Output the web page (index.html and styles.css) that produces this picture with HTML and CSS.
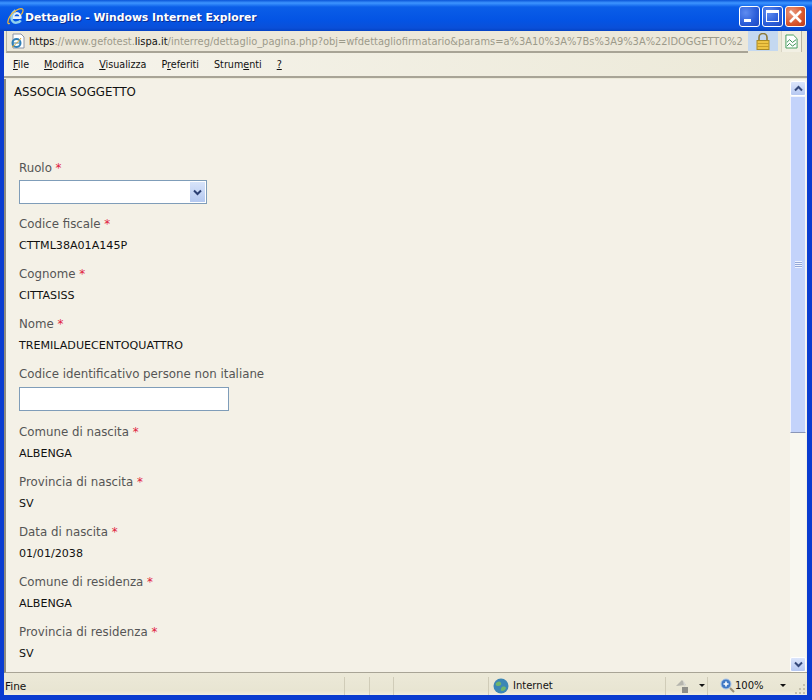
FILE: index.html
```html
<!DOCTYPE html>
<html lang="en">
<head>
  <meta charset="UTF-8">
  <title>Dettaglio - Windows Internet Explorer</title>
  <link rel="stylesheet" href="styles.css">
</head>
<body>
  <div class="window">
    <div class="titlebar">
      <svg class="ie-logo" width="19" height="19" viewBox="0 0 20 20">
        <path d="M15.500 11.500H7.500C7.500 8.500 9.500 6.500 11.500 6.500s3.800 2 3.800 4.500H8" fill="none" stroke="#e8f4fb" stroke-width="2.400"/>
        <path d="M15.500 14c-1.500 2.500-6.500 3.500-8.500 1-2.500-3-1-9 3-11.500" fill="none" stroke="#8fd0ee" stroke-width="2.600"/>
        <path d="M4 17C1 19 1.500 14 4 10c3-5 10-9 13-8 2 .7.500 4-1 6" fill="none" stroke="#f0b93c" stroke-width="1.300"/>
      </svg>
      <span class="title-text">Dettaglio - Windows Internet Explorer</span>
      <div class="win-buttons">
        <div class="win-btn"><span class="icon-min"></span></div>
        <div class="win-btn"><span class="icon-max"></span></div>
        <div class="win-btn close">
          <svg width="15" height="15" viewBox="0 0 15 15"><path d="M2 2l11 11M13 2L2 13" stroke="#fff" stroke-width="2.600"/></svg>
        </div>
      </div>
    </div>

    <div class="inner">
      <div class="addressbar">
        <div class="address-box">
          <svg class="page-icon" width="16" height="16" viewBox="0 0 16 16">
            <path d="M3 1h8l3 3v11H3z" fill="#fff" stroke="#8a94a6"/>
            <circle cx="6.500" cy="10" r="4" fill="none" stroke="#2f80b8" stroke-width="2"/>
            <path d="M3 10h7" stroke="#2f80b8"/>
            <path d="M2 14c2-1 7-6 9-9" stroke="#e0a92e" fill="none"/>
          </svg>
          <span class="url"><span class="url-dark">https</span>://www.gefotest.<span class="url-dark">lispa.it</span>/interreg/dettaglio_pagina.php?obj=wfdettagliofirmatario&amp;params=a%3A10%3A%7Bs%3A9%3A%22IDOGGETTO%2</span>
        </div>
        <div class="lock-box">
          <svg width="14" height="17" viewBox="0 0 14 17">
            <path d="M3 8V4.500a4 4 0 0 1 8 0V8" fill="none" stroke="#8d7a3a" stroke-width="1.600"/>
            <rect x="1" y="7.500" width="12" height="9" fill="#eec544" stroke="#a98a24"/>
            <path d="M1 10.500h12M1 13.500h12" stroke="#c79e2a"/>
          </svg>
        </div>
        <div class="compat-box">
          <svg width="13" height="15" viewBox="0 0 14 16">
            <path d="M1 1h8l4 4v10H1z" fill="#fff" stroke="#3d9a56"/>
            <path d="M2 9l3-3 3 3 4-3M2 13l3-3 3 3 4-3" fill="none" stroke="#2f8a4a"/>
          </svg>
        </div>
      </div>

      <div class="menubar">
        <span class="menu-item"><u>F</u>ile</span>
        <span class="menu-item"><u>M</u>odifica</span>
        <span class="menu-item"><u>V</u>isualizza</span>
        <span class="menu-item">P<u>r</u>eferiti</span>
        <span class="menu-item">Strum<u>e</u>nti</span>
        <span class="menu-item"><u>?</u></span>
      </div>

      <div class="viewport">
        <div class="content">
          <div class="page-title">ASSOCIA SOGGETTO</div>

          <div class="field field-select">
            <div class="label">Ruolo <span class="req">*</span></div>
            <div class="select-box">
              <div class="select-arrow">
                <svg width="9" height="7" viewBox="0 0 9 7"><path d="M1 1.500l3.500 3.500L8 1.500" fill="none" stroke="#2b3f73" stroke-width="2"/></svg>
              </div>
            </div>
          </div>
          <div class="field">
            <div class="label">Codice fiscale <span class="req">*</span></div>
            <div class="value">CTTML38A01A145P</div>
          </div>
          <div class="field">
            <div class="label">Cognome <span class="req">*</span></div>
            <div class="value">CITTASISS</div>
          </div>
          <div class="field">
            <div class="label">Nome <span class="req">*</span></div>
            <div class="value">TREMILADUECENTOQUATTRO</div>
          </div>
          <div class="field field-input">
            <div class="label">Codice identificativo persone non italiane</div>
            <div class="text-input"></div>
          </div>
          <div class="field">
            <div class="label">Comune di nascita <span class="req">*</span></div>
            <div class="value">ALBENGA</div>
          </div>
          <div class="field">
            <div class="label">Provincia di nascita <span class="req">*</span></div>
            <div class="value">SV</div>
          </div>
          <div class="field">
            <div class="label">Data di nascita <span class="req">*</span></div>
            <div class="value">01/01/2038</div>
          </div>
          <div class="field">
            <div class="label">Comune di residenza <span class="req">*</span></div>
            <div class="value">ALBENGA</div>
          </div>
          <div class="field">
            <div class="label">Provincia di residenza <span class="req">*</span></div>
            <div class="value">SV</div>
          </div>
        </div>

        <div class="scrollbar">
          <div class="scroll-btn">
            <svg width="9" height="7" viewBox="0 0 9 7"><path d="M1 5.500L4.500 2 8 5.500" fill="none" stroke="#34487a" stroke-width="2"/></svg>
          </div>
          <div class="scroll-thumb"><span class="grip"></span></div>
          <div class="scroll-track"></div>
          <div class="scroll-btn">
            <svg width="9" height="7" viewBox="0 0 9 7"><path d="M1 1.500L4.500 5 8 1.500" fill="none" stroke="#34487a" stroke-width="2"/></svg>
          </div>
        </div>
      </div>

      <div class="statusbar">
        <div class="status-text">Fine</div>
        <div class="status-cell blank-a"></div>
        <div class="status-cell blank-b"></div>
        <div class="status-cell blank-c"></div>
        <div class="status-cell zone">
          <svg width="16" height="16" viewBox="0 0 16 16">
            <circle cx="8" cy="8" r="7.500" fill="#3b86b5"/>
            <path d="M3 5c2-2 4-2 5 0s-1 3-3 3-3-1-2-3zM9 9c2-1 4 0 4 1s-2 3-4 3 -1-3 0-4z" fill="#6fb56a"/>
          </svg>
          <span>Internet</span>
        </div>
        <div class="status-cell protect">
          <svg width="18" height="16" viewBox="0 0 18 16">
            <path d="M1 8l6-6 4 5z" fill="#b5b5ad"/>
            <path d="M8 2l3 5-2 2z" fill="#d8d8d2"/>
            <rect x="7" y="9" width="6" height="6" fill="#8e8e88"/>
          </svg>
          <span class="caret"></span>
        </div>
        <div class="status-cell zoom">
          <svg width="15" height="15" viewBox="0 0 15 15">
            <circle cx="6" cy="6" r="5" fill="#3f78c4" stroke="#a9c4e6"/>
            <path d="M3.500 6h5M6 3.500v5" stroke="#fff" stroke-width="1.600"/>
            <path d="M10 10l4 4" stroke="#9a8f78" stroke-width="2"/>
          </svg>
          <span class="zoom-text">100%</span>
          <span class="caret"></span>
          <svg class="resize-grip" width="12" height="12" viewBox="0 0 12 12">
            <path d="M9 1h2v2H9zM5 5h2v2H5zM9 5h2v2H9zM1 9h2v2H1zM5 9h2v2H5zM9 9h2v2H9z" fill="#c4c0ac"/>
          </svg>
        </div>
      </div>
    </div>
  </div>
</body>
</html>
```

FILE: styles.css
```css
html, body {
  margin: 0;
  padding: 0;
  height: 700px;
  overflow: hidden;
}

.window {
  height: 700px;
  display: flex;
  flex-direction: column;
  font-family: "Liberation Sans", Arial, sans-serif;
  background-color: #0a3cd0;
}

.titlebar {
  height: 31px;
  flex: none;
  box-sizing: border-box;
  display: flex;
  align-items: center;
  padding: 0 6px 0 6px;
  background: linear-gradient(to bottom, #0a55d8 0, #3d95ff 3px, #0a5ee8 7px, #0454e4 20px, #0a4fd8 28px, #0442c4 31px);
}

.ie-logo {
  flex: none;
  margin-top: 2px;
}

.title-text {
  flex: 1;
  margin-top: 4px;
  color: #fff;
  font-family: "DejaVu Sans", sans-serif;
  font-size: 10.800px;
  font-weight: bold;
  text-shadow: 1px 1px 0 #0a2c90;
}

.win-buttons {
  display: flex;
  gap: 2px;
  margin-top: 1px;
}

.win-btn {
  width: 21px;
  height: 21px;
  box-sizing: border-box;
  border: 1px solid #fff;
  border-radius: 3px;
  background: radial-gradient(circle at 30% 30%, #5f8cf0, #2a5cd8 60%, #2048c0);
  position: relative;
  display: flex;
  align-items: center;
  justify-content: center;
}

.win-btn.close {
  background: radial-gradient(circle at 30% 30%, #ea9a80, #d8562c 60%, #b83a1c);
}

.icon-min {
  width: 7px;
  height: 3px;
  background-color: #fff;
  margin-top: 9px;
  margin-right: 4px;
}

.icon-max {
  width: 13px;
  height: 12px;
  box-sizing: border-box;
  border: 1px solid #fff;
  border-top-width: 3px;
}

.inner {
  flex: 1;
  min-height: 0;
  margin: 0 5px 5px 4px;
  display: flex;
  flex-direction: column;
  background-color: #ece9d8;
}

.addressbar {
  height: 22px;
  flex: none;
  display: flex;
  background-color: #ece9d8;
}

.address-box {
  flex: none;
  width: 742px;
  margin-left: 2px;
  box-sizing: border-box;
  border-bottom: 2px solid #a8a496;
  border-left: 1px solid #b8b4a4;
  display: flex;
  align-items: center;
  background-color: #ece8da;
  overflow: hidden;
  white-space: nowrap;
}

.page-icon {
  flex: none;
  margin: 0 3px 0 3px;
}

.url {
  font-family: "DejaVu Sans", sans-serif;
  font-size: 9.900px;
  color: #9c9a8a;
}

.url-dark {
  color: #111;
}

.lock-box {
  flex: none;
  width: 30px;
  height: 20px;
  background-color: #c4d8f0;
  display: flex;
  align-items: center;
  justify-content: center;
}

.compat-box {
  flex: none;
  width: 21px;
  height: 21px;
  margin-left: 3px;
  box-sizing: border-box;
  border-right: 1px solid #b8b4a4;
  border-left: 1px solid #d8d4c4;
  background-color: #f2f0e4;
  display: flex;
  align-items: center;
  justify-content: center;
}

.menubar {
  height: 25px;
  flex: none;
  box-sizing: border-box;
  display: flex;
  align-items: center;
  gap: 15px;
  padding-left: 9px;
  background: linear-gradient(to right, #f6f4ec, #ece9d8);
  border-bottom: 2px solid #a8a496;
  font-family: "DejaVu Sans", sans-serif;
  font-size: 9.600px;
  color: #111;
}

.viewport {
  flex: 1;
  min-height: 0;
  display: flex;
  background-color: #f4f1e7;
  border-left: 2px solid #8e8c80;
  border-bottom: 1px solid #a8a496;
  margin-top: 1px;
}

.content {
  flex: 1;
  min-width: 0;
  overflow: hidden;
  padding: 5px 0 0 8px;
  font-family: "DejaVu Sans", sans-serif;
  font-size: 11.800px;
  line-height: 16px;
  color: #111;
}

.page-title {
  height: 76px;
}

.field {
  height: 50px;
  padding-left: 5px;
}

.field-select {
  height: 56px;
}

.field-input {
  height: 58px;
}

.label {
  color: #555;
  margin-bottom: 5px;
}

.value {
  font-size: 11.100px;
  padding-top: 1px;
}

.req {
  color: #e0203c;
}

.select-box {
  width: 188px;
  height: 24px;
  box-sizing: border-box;
  border: 1px solid #7f9db9;
  background-color: #fff;
  display: flex;
  justify-content: flex-end;
  padding: 1px;
  margin-top: -1px;
}

.select-arrow {
  width: 15px;
  background: linear-gradient(to bottom, #d8e4fa, #b4c8f0);
  display: flex;
  align-items: center;
  justify-content: center;
}

.text-input {
  width: 210px;
  height: 24px;
  box-sizing: border-box;
  border: 1px solid #7f9db9;
  background-color: #fff;
}

.scrollbar {
  flex: none;
  width: 16px;
  margin-right: 1px;
  padding-top: 2px;
  display: flex;
  flex-direction: column;
  background-color: #f8f7f0;
}

.scroll-btn {
  height: 15px;
  flex: none;
  box-sizing: border-box;
  border: 1px solid #fff;
  border-radius: 2px;
  background: linear-gradient(to bottom, #dbe5fb, #b6c8f2);
  display: flex;
  align-items: center;
  justify-content: center;
}

.scroll-thumb {
  height: 337px;
  flex: none;
  box-sizing: border-box;
  border: 1px solid #f2f4fc;
  border-bottom-color: #8a96b8;
  background-color: #c3d3fb;
  display: flex;
  align-items: center;
  justify-content: center;
}

.grip {
  width: 7px;
  height: 7px;
  background: repeating-linear-gradient(to bottom, #eef3ff 0, #eef3ff 1px, #94a8d8 1px, #94a8d8 2px);
}

.scroll-track {
  flex: 1;
}

.statusbar {
  height: 22px;
  flex: none;
  box-sizing: border-box;
  padding-top: 3px;
  display: flex;
  align-items: center;
  font-family: "DejaVu Sans", sans-serif;
  font-size: 10px;
  color: #111;
  background: linear-gradient(to bottom, #ece9d8, #e8e5d2 80%, #f0eee0);
}

.status-text {
  width: 339px;
  flex: none;
  padding-left: 1px;
  font-size: 10.500px;
}

.status-cell {
  height: 18px;
  box-sizing: border-box;
  border-left: 1px solid #d0ccb8;
  display: flex;
  align-items: center;
  flex: none;
}

.blank-a {
  width: 25px;
}

.blank-b {
  width: 24px;
}

.blank-c {
  width: 95px;
}

.zone {
  width: 177px;
  gap: 4px;
  padding-left: 4px;
}

.protect {
  width: 42px;
  gap: 6px;
  padding-left: 9px;
}

.zoom {
  flex: 1;
  padding-left: 12px;
  position: relative;
}

.zoom-text {
  width: 45px;
}

.resize-grip {
  position: absolute;
  right: 1px;
  bottom: 0;
}

.caret {
  width: 0;
  height: 0;
  border-left: 3px solid transparent;
  border-right: 3px solid transparent;
  border-top: 3px solid #111;
}
```
